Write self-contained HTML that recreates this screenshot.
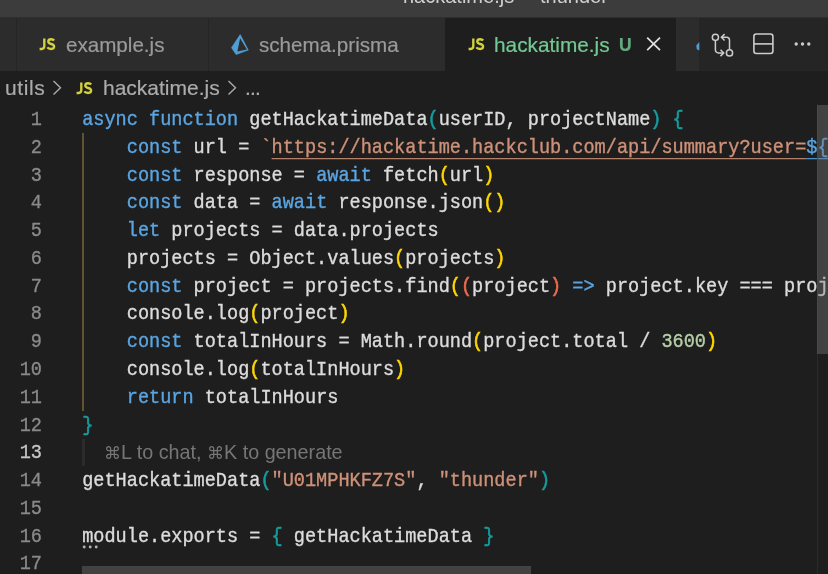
<!DOCTYPE html>
<html><head><meta charset="utf-8">
<style>
*{margin:0;padding:0;box-sizing:border-box}
html,body{width:828px;height:574px;overflow:hidden;background:#1e1e1e}
body{position:relative;font-family:"Liberation Sans",sans-serif}
.abs{position:absolute}
svg{position:absolute;overflow:visible}
#title{left:0;top:0;width:828px;height:18px;background:#3c3c3c}
#title .bd{position:absolute;left:0;top:17px;width:828px;height:1px;background:#2e2e2e}
#title span{will-change:transform;position:absolute;top:-14.3px;font-size:20px;color:#d0d0d0;white-space:nowrap;line-height:20px}
#tabs{left:0;top:18px;width:828px;height:52.5px;background:#252526}
.tab{position:absolute;top:0;height:52.5px;background:#2c2c2c}
.tname{will-change:transform;-webkit-text-stroke:0.2px currentColor;position:absolute;top:1px;line-height:52.5px;font-size:20.6px;color:#9a9a9a;white-space:nowrap}
.js{position:absolute;font-weight:bold;color:#cbcb41;white-space:nowrap;font-size:14.5px;letter-spacing:-0.3px;line-height:14px}
#bc{left:0;top:70.5px;width:828px;height:33.5px;background:#1e1e1e}
#bc span.t{will-change:transform;-webkit-text-stroke:0.2px currentColor;position:absolute;white-space:nowrap;top:0.7px;line-height:34px;font-size:21px;color:#ababab}
.code{font-family:"Liberation Mono",monospace;font-size:18.57px;color:#dcdcdc;white-space:pre;-webkit-text-stroke:0.35px currentColor}
.ln{position:absolute;left:0;width:42px;text-align:right;font-family:"Liberation Mono",monospace;font-size:18.57px;color:#8a8a8a;-webkit-text-stroke:0.3px currentColor;height:27.78px;line-height:27.78px;transform-origin:0 18px;transform:translateY(2.8px) scaleY(1.07)}
.ln.cur{color:#c6c6c6}
.line{position:absolute;left:82.2px;height:27.78px;line-height:27.78px;transform-origin:0 18px;transform:translateY(2.8px) scaleY(1.07)}
.k{color:#5aa5e2}
.s{color:#ce9178}
.n{color:#b5cea8}
.b1{color:#169c9c;-webkit-text-stroke:0.55px currentColor}
.b2{color:#ffd700;-webkit-text-stroke:0.55px currentColor}
.b3{color:#ef6a4e;-webkit-text-stroke:0.55px currentColor}
.us{text-decoration:underline;text-decoration-thickness:1.4px;text-underline-offset:5.2px;text-decoration-skip-ink:none}
.ub{text-decoration:underline;text-decoration-thickness:1.4px;text-underline-offset:5.2px;text-decoration-skip-ink:none}
</style></head><body>
<div id="title" class="abs"><span style="left:403px">hackatime.js</span><span style="left:539.5px">thunder</span><div class="bd"></div></div>
<div id="tabs" class="abs">
  <div class="tab" style="left:0;width:16px"></div>
  <div class="tab" style="left:17px;width:191px">
    <svg class="jsi" width="18" height="13" style="left:22.2px;top:20px" viewBox="0 0 18 13"><g fill="none" stroke="#d2d23e" stroke-width="2.35" stroke-linecap="butt"><path d="M5.3 0.6 V8.1 Q5.3 11 2.7 11 H0.6"/><path d="M15.1 2.5 Q14.2 1.2 12.1 1.2 Q9.3 1.2 9.3 3.5 Q9.3 5.3 12.1 6 Q15.1 6.7 15.1 8.6 Q15.1 11 12.1 11 Q9.5 11 8.3 9.4"/></g></svg>
    <div class="tname" style="left:48.7px">example.js</div>
  </div>
  <div class="tab" style="left:209px;width:235.5px">
    <svg width="20" height="22" style="left:22px;top:15.5px" viewBox="0 0 20 22">
      <path d="M9.2 0.6 L0.5 13.7 L5.1 20.6 L17.3 16.1 Z" fill="#4f9fd5" stroke="#4f9fd5" stroke-width="0.6" stroke-linejoin="round"/>
      <path d="M9.1 4.2 L6.4 17.4 L15.9 15.5 Z" fill="#2c2c2c"/>
    </svg>
    <div class="tname" style="left:50.2px">schema.prisma</div>
  </div>
  <div class="tab" style="left:444.5px;width:231.5px;background:#1e1e1e">
    <svg class="jsi" width="18" height="13" style="left:23px;top:20px" viewBox="0 0 18 13"><g fill="none" stroke="#d2d23e" stroke-width="2.35" stroke-linecap="butt"><path d="M5.3 0.6 V8.1 Q5.3 11 2.7 11 H0.6"/><path d="M15.1 2.5 Q14.2 1.2 12.1 1.2 Q9.3 1.2 9.3 3.5 Q9.3 5.3 12.1 6 Q15.1 6.7 15.1 8.6 Q15.1 11 12.1 11 Q9.5 11 8.3 9.4"/></g></svg>
    <div class="tname" style="left:49.5px;color:#73c991;font-size:20.8px">hackatime.js</div>
    <div class="tname" style="left:174px;color:#64ac7e;font-weight:bold;font-size:17.5px">U</div>
    <svg width="16" height="16" style="left:201.4px;top:18.4px" viewBox="0 0 16 16">
      <path d="M1.2 1.6 L14 14.2 M14 1.6 L1.2 14.2" stroke="#e2e2e2" stroke-width="1.7"/>
    </svg>
  </div>
  <div class="tab" style="left:676px;width:23.4px">
    <svg width="6" height="10" style="left:20.2px;top:24px" viewBox="0 0 6 10">
      <path d="M3.3 0 L0.3 3.6 L0.8 7.2 L3.3 8.4 Z" fill="#4f9fd5"/>
    </svg>
  </div>
  <!-- git compare icon -->
  <svg width="26" height="26" style="left:709.2px;top:7.9px" viewBox="0 0 26 26">
    <g fill="none" stroke="#cccccc" stroke-width="1.5">
      <circle cx="6.4" cy="11.3" r="3.1"/>
      <circle cx="20.5" cy="26.9" r="3.1"/>
      <path d="M6.4 14.4 V23.9 a3 3 0 0 0 3 3 H14.5"/>
      <path d="M11.5 23.7 L14.7 26.9 L11.5 30.1"/>
      <path d="M20.5 23.8 V14.3 a3 3 0 0 0 -3 -3 H12.5"/>
      <path d="M15.6 8.1 L12.4 11.3 L15.6 14.5"/>
    </g>
  </svg>
  <!-- split icon -->
  <svg width="22" height="22" style="left:752px;top:14px" viewBox="0 0 22 22">
    <g fill="none" stroke="#cccccc" stroke-width="1.6">
      <rect x="1.9" y="2" width="19" height="19.5" rx="2.4"/>
      <path d="M1.9 11.9 H20.9"/>
    </g>
  </svg>
  <!-- more icon -->
  <svg width="20" height="6" style="left:792px;top:23.2px" viewBox="0 0 20 6">
    <g fill="#cccccc"><circle cx="4.2" cy="3" r="1.7"/><circle cx="10.5" cy="3" r="1.7"/><circle cx="16.8" cy="3" r="1.7"/></g>
  </svg>
</div>
<div id="bc" class="abs">
  <span class="t" style="left:5px;letter-spacing:0.6px">utils</span>
  <svg width="12" height="16" style="left:51.5px;top:9.8px" viewBox="0 0 12 16">
    <path d="M1.5 1 L8.5 7.8 L1.5 14.6" fill="none" stroke="#ababab" stroke-width="1.4"/>
  </svg>
  <svg class="jsi" width="18" height="13" style="left:75.7px;top:11px" viewBox="0 0 18 13"><g fill="none" stroke="#d2d23e" stroke-width="2.35" stroke-linecap="butt"><path d="M5.3 0.6 V8.1 Q5.3 11 2.7 11 H0.6"/><path d="M15.1 2.5 Q14.2 1.2 12.1 1.2 Q9.3 1.2 9.3 3.5 Q9.3 5.3 12.1 6 Q15.1 6.7 15.1 8.6 Q15.1 11 12.1 11 Q9.5 11 8.3 9.4"/></g></svg>
  <span class="t" style="left:102.5px">hackatime.js</span>
  <svg width="12" height="16" style="left:226.6px;top:9.8px" viewBox="0 0 12 16">
    <path d="M1.5 1 L8.5 7.8 L1.5 14.6" fill="none" stroke="#ababab" stroke-width="1.4"/>
  </svg>
  <span class="t" style="left:244.5px;letter-spacing:-0.8px">...</span>
</div>
<div id="editor" class="abs" style="left:0;top:104px;width:828px;height:470px">
  <!-- indent guide -->
  <div class="abs" style="left:82.3px;top:28.6px;width:1.8px;height:278px;background:#625430"></div>
  <!-- cursor line hint bar -->
  <div class="abs" style="left:81.8px;top:335.2px;width:3.6px;height:27px;background:#2b2b2b"></div>
  <div class="abs" style="left:103.8px;top:333.8px;line-height:28px;font-size:19.75px;color:#767676;white-space:nowrap;will-change:transform"><span style="font-size:17px">⌘</span>L to chat, <span style="font-size:17px">⌘</span>K to generate</div>
<div class="ln" style="top:0.00px">1</div>
<div class="line code" style="top:0.00px"><span class="k">async</span> <span class="k">function</span> getHackatimeData<span class="b1">(</span>userID, projectName<span class="b1">)</span> <span class="b1">{</span></div>
<div class="ln" style="top:27.78px">2</div>
<div class="line code" style="top:27.78px">    <span class="k">const</span> url = <span class="s">`<span class="us">https://hackatime.hackclub.com/api/summary?user=</span></span><span class="ub k">${</span></div>
<div class="ln" style="top:55.56px">3</div>
<div class="line code" style="top:55.56px">    <span class="k">const</span> response = <span class="k">await</span> fetch<span class="b2">(</span>url<span class="b2">)</span></div>
<div class="ln" style="top:83.34px">4</div>
<div class="line code" style="top:83.34px">    <span class="k">const</span> data = <span class="k">await</span> response.json<span class="b2">()</span></div>
<div class="ln" style="top:111.12px">5</div>
<div class="line code" style="top:111.12px">    <span class="k">let</span> projects = data.projects</div>
<div class="ln" style="top:138.90px">6</div>
<div class="line code" style="top:138.90px">    projects = Object.values<span class="b2">(</span>projects<span class="b2">)</span></div>
<div class="ln" style="top:166.68px">7</div>
<div class="line code" style="top:166.68px">    <span class="k">const</span> project = projects.find<span class="b2">(</span><span class="b3">(</span>project<span class="b3">)</span> <span class="k">=&gt;</span> project.key === proj</div>
<div class="ln" style="top:194.46px">8</div>
<div class="line code" style="top:194.46px">    console.log<span class="b2">(</span>project<span class="b2">)</span></div>
<div class="ln" style="top:222.24px">9</div>
<div class="line code" style="top:222.24px">    <span class="k">const</span> totalInHours = Math.round<span class="b2">(</span>project.total / <span class="n">3600</span><span class="b2">)</span></div>
<div class="ln" style="top:250.02px">10</div>
<div class="line code" style="top:250.02px">    console.log<span class="b2">(</span>totalInHours<span class="b2">)</span></div>
<div class="ln" style="top:277.80px">11</div>
<div class="line code" style="top:277.80px">    <span class="k">return</span> totalInHours</div>
<div class="ln" style="top:305.58px">12</div>
<div class="line code" style="top:305.58px"><span class="b1">}</span></div>
<div class="ln cur" style="top:333.36px">13</div>
<div class="ln" style="top:361.14px">14</div>
<div class="line code" style="top:361.14px">getHackatimeData<span class="b1">(</span><span class="s">"U01MPHKFZ7S"</span>, <span class="s">"thunder"</span><span class="b1">)</span></div>
<div class="ln" style="top:388.92px">15</div>
<div class="ln" style="top:416.70px">16</div>
<div class="line code" style="top:416.70px">module.exports = <span class="b1">{</span> getHackatimeData <span class="b1">}</span></div>
<div class="ln" style="top:444.48px">17</div>
  <!-- hint dots -->
  <svg width="20" height="4" style="left:82px;top:440.5px" viewBox="0 0 20 4">
    <g fill="#b4b4b4"><circle cx="2.2" cy="2" r="1.45"/><circle cx="8.2" cy="2" r="1.45"/><circle cx="14.2" cy="2" r="1.45"/></g>
  </svg>
  <!-- vertical scrollbar -->
  <div class="abs" style="left:816.7px;top:0;width:1.6px;height:470px;background:#2a2a2a"></div>
  <div class="abs" style="left:816.7px;top:1.3px;width:11.3px;height:248.5px;background:rgba(121,121,121,0.4)"></div>
  <!-- horizontal scrollbar -->
  <div class="abs" style="left:82.3px;top:462.3px;width:449px;height:10px;background:rgba(121,121,121,0.4)"></div>
</div>
</body></html>
